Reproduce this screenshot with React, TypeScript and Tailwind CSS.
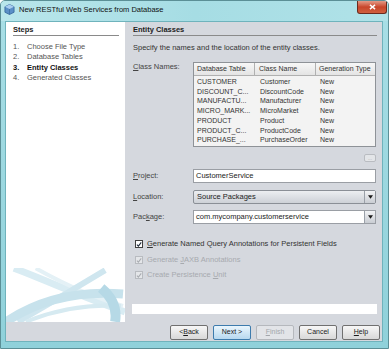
import React from "react";

const U = ({ children }: { children: React.ReactNode }) => (
  <span className="underline underline-offset-[1px]">{children}</span>
);

const Check = ({ disabled }: { disabled?: boolean }) => (
  <span
    className={`w-[8px] h-[8px] shrink-0 border flex items-center justify-center ${
      disabled ? "border-[#b8bbc0] bg-[#e4e6e9]" : "border-[#3f3f3f] bg-white"
    }`}
  >
    <svg viewBox="0 0 8 8" className="w-[7px] h-[7px]">
      <path d="M1.2 4.2 L3.2 6.2 L7 1.2" fill="none" stroke={disabled ? "#a9acb1" : "#1e2a3a"} strokeWidth="1.4" />
    </svg>
  </span>
);

const Arrow = () => (
  <span className="w-[11px] h-full border-l border-[#9aa0a8] bg-gradient-to-b from-[#f2f3f5] to-[#c9cdd3] flex items-center justify-center">
    <svg viewBox="0 0 6 4" className="w-[5px] h-[4px]">
      <path d="M0 0 L6 0 L3 4 Z" fill="#1a1a1a" />
    </svg>
  </span>
);

const rows = [
  ["CUSTOMER", "Customer"],
  ["DISCOUNT_C...", "DiscountCode"],
  ["MANUFACTU...", "Manufacturer"],
  ["MICRO_MARK...", "MicroMarket"],
  ["PRODUCT", "Product"],
  ["PRODUCT_C...", "ProductCode"],
  ["PURCHASE_...", "PurchaseOrder"],
];

const Btn = ({ children, kind }: { children: React.ReactNode; kind?: "default" | "disabled" }) => (
  <div
    className={`w-[38px] h-[15px] rounded-[2px] border flex items-center justify-center text-[7px] ${
      kind === "default"
        ? "border-[#3d7bad] bg-gradient-to-b from-[#eaf6fd] to-[#b7d8ef] text-[#1a1a1a]"
        : kind === "disabled"
        ? "border-[#b5b8bd] bg-[#e2e4e8] text-[#a3a6ab]"
        : "border-[#707070] bg-gradient-to-b from-[#f7f7f7] to-[#d8d8d8] text-[#1a1a1a]"
    }`}
  >
    {children}
  </div>
);

export default function App() {
  return (
    <div className="w-[389px] h-[349px] flex flex-col bg-gradient-to-b from-[#a9dfe6] to-[#8fd1da] rounded-t-[5px] border border-[#5b8f96] font-['Liberation_Sans',Arial,sans-serif] overflow-hidden">
      {/* title bar */}
      <div className="h-[20px] flex items-start justify-between pl-[3px] pr-[1px] bg-gradient-to-r from-[#b9e6eb] via-[#a6dde4] to-[#b0e2e8]">
        <div className="flex items-center gap-[4px] h-[17px]">
          <svg viewBox="0 0 12 12" className="w-[11px] h-[11px]">
            <path d="M6 0.5 L11 3 L11 9 L6 11.5 L1 9 L1 3 Z" fill="#5b8fc7" stroke="#2d5f95" strokeWidth="0.8" />
            <path d="M6 0.5 L11 3 L6 5.5 L1 3 Z" fill="#a9cdf0" />
            <path d="M6 5.5 L6 11.5" stroke="#2d5f95" strokeWidth="0.6" />
          </svg>
          <span className="text-[7.5px] text-[#111]">New RESTful Web Services from Database</span>
        </div>
        <div className="w-[30px] h-[13px] rounded-b-[3px] border border-t-0 border-[#6b2a1e] bg-gradient-to-b from-[#e39a87] via-[#c8452a] to-[#d0603f] flex items-center justify-center">
          <svg viewBox="0 0 8 7" className="w-[7px] h-[6px]">
            <path d="M1 1 L7 6 M7 1 L1 6" stroke="#fff" strokeWidth="1.6" />
          </svg>
        </div>
      </div>

      {/* client area */}
      <div className="flex-1 flex flex-col pl-[4px] pr-[5px] pb-[6px]">
        <div className="flex-1 flex flex-col bg-[#d5d8de] border border-[#6fb3bc]">
          <div className="h-[300px] flex">
            {/* steps */}
            <div className="w-[119px] bg-white flex flex-col pl-[7px] pr-[6px]">
              <div className="h-[14px] flex items-end pb-[1px] border-b border-[#8a8a8a] text-[7.5px] font-bold text-[#222] leading-[9px]">
                Steps
              </div>
              <div className="mt-[6px] text-[7.5px] leading-[10.3px] text-[#555]">
                <div className="flex"><span className="w-[14px]">1.</span>Choose File Type</div>
                <div className="flex"><span className="w-[14px]">2.</span>Database Tables</div>
                <div className="flex font-bold text-[#111]"><span className="w-[14px]">3.</span>Entity Classes</div>
                <div className="flex"><span className="w-[14px]">4.</span>Generated Classes</div>
              </div>
              <svg viewBox="0 0 120 54" className="mt-auto -ml-[7px] w-[119px] h-[54px]">
                <path d="M8 0 C40 12 80 30 120 44" stroke="#d9ecf3" strokeWidth="7" fill="none" />
                <path d="M30 0 C55 14 90 30 118 38" stroke="#e4f1f6" strokeWidth="4" fill="none" />
                <path d="M100 2 C70 20 40 38 12 54" stroke="#cfe6ef" strokeWidth="6" fill="none" />
                <path d="M0 54 C30 34 70 22 118 26" stroke="#c7e2ec" strokeWidth="9" fill="none" />
                <path d="M20 54 C50 42 80 36 116 38" stroke="#d6eaf1" strokeWidth="4" fill="none" />
                <path d="M96 20 C108 30 112 42 110 54" stroke="#b6d9e6" strokeWidth="10" fill="none" />
              </svg>
            </div>

            {/* form */}
            <div className="flex-1 flex flex-col pl-[8px] pr-[6px] text-[7.5px] text-[#333]">
              <div className="h-[14px] flex items-end pb-[1px] border-b border-[#8a8a8a] font-bold text-[#222] leading-[9px]">
                Entity Classes
              </div>
              <div className="mt-[7px] leading-[10px] text-[#333]">Specify the names and the location of the entity classes.</div>

              <div className="mt-[9px] flex">
                <div className="w-[60px] leading-[10px] text-[#444]">
                  <U>C</U>lass Names:
                </div>
                <div className="w-[183px] h-[85px] border border-[#8e9297] bg-[#f3f3f3] text-[7px] leading-[9.7px]">
                  <div className="h-[13px] flex bg-gradient-to-b from-[#f7f7f7] to-[#e4e4e4] border-b border-[#b0b0b0] text-[#333]">
                    <div className="w-[61px] pl-[3px] flex items-center border-r border-[#b0b0b0]">Database Table</div>
                    <div className="w-[61px] pl-[4px] flex items-center border-r border-[#b0b0b0]">Class Name</div>
                    <div className="flex-1 pl-[3px] flex items-center">Generation Type</div>
                  </div>
                  <div className="pt-[1px]">
                    {rows.map((r) => (
                      <div key={r[0]} className="flex">
                        <div className="w-[61px] pl-[3px] whitespace-nowrap overflow-hidden">{r[0]}</div>
                        <div className="w-[61px] pl-[5px]">{r[1]}</div>
                        <div className="flex-1 pl-[4px]">New</div>
                      </div>
                    ))}
                  </div>
                </div>
              </div>

              <div className="mt-[7px] flex justify-end pr-[1px]">
                <div className="w-[12px] h-[8px] rounded-[2px] border border-[#b9bcc1] bg-[#e3e5e8] text-[5px] leading-[5px] text-[#aaa] flex items-end justify-center">...</div>
              </div>

              <div className="mt-[7px] flex items-center">
                <div className="w-[60px] text-[#444]"><U>P</U>roject:</div>
                <div className="w-[183px] h-[14px] border border-[#9a9ea4] bg-white pl-[2px] flex items-center text-[#222]">CustomerService</div>
              </div>
              <div className="mt-[7px] flex items-center">
                <div className="w-[60px] text-[#444]"><U>L</U>ocation:</div>
                <div className="w-[183px] h-[14px] border border-[#8a8f96] rounded-[2px] bg-gradient-to-b from-[#eceef1] to-[#cdd1d7] flex items-center text-[#222]">
                  <span className="flex-1 pl-[3px]">Source Packages</span>
                  <Arrow />
                </div>
              </div>
              <div className="mt-[6px] flex items-center">
                <div className="w-[60px] text-[#444]">Pac<U>k</U>age:</div>
                <div className="w-[183px] h-[14px] border border-[#9a9ea4] bg-white flex items-center text-[#222]">
                  <span className="flex-1 pl-[2px]">com.mycompany.customerservice</span>
                  <Arrow />
                </div>
              </div>

              <div className="mt-[15px] h-[10px] flex items-center gap-[4px] pl-[2px] text-[#333]">
                <Check />
                <span><U>G</U>enerate Named Query Annotations for Persistent Fields</span>
              </div>
              <div className="mt-[6px] h-[10px] flex items-center gap-[4px] pl-[2px] text-[#a7aaaf]">
                <Check disabled />
                <span>Generate <U>J</U>AXB Annotations</span>
              </div>
              <div className="mt-[5px] h-[10px] flex items-center gap-[4px] pl-[2px] text-[#a7aaaf]">
                <Check disabled />
                <span>Create Persistence <U>U</U>nit</span>
              </div>

              <div className="mt-[24px] -ml-[1px] w-[245px] h-[10px] bg-white" />
            </div>
          </div>

          {/* buttons */}
          <div className="flex-1 flex justify-end items-start pt-[3px] pr-[2px] gap-[5px]">
            <Btn>&lt; <U>B</U>ack</Btn>
            <Btn kind="default">Next &gt;</Btn>
            <Btn kind="disabled"><U>F</U>inish</Btn>
            <Btn>Cancel</Btn>
            <Btn><U>H</U>elp</Btn>
          </div>
        </div>
      </div>
    </div>
  );
}
